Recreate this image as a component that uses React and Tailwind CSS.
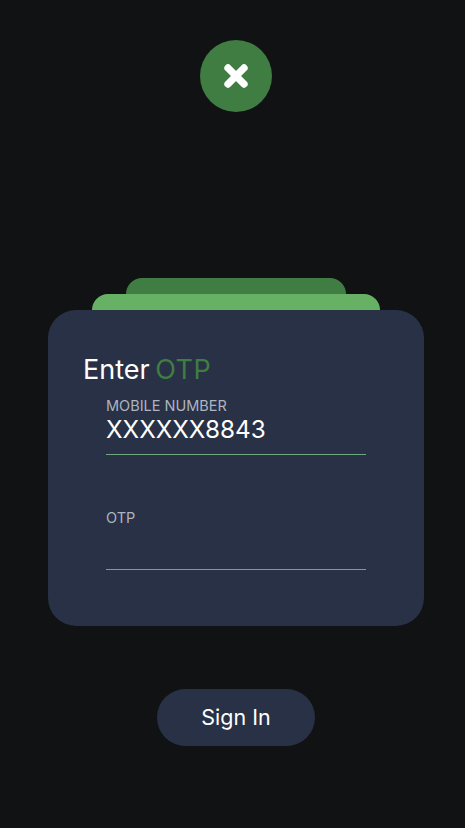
import { X } from 'lucide-react';

export default function App() {
  return (
    <div className="flex flex-col items-center h-[828px] pl-[7px] bg-[#111214] font-['Inter',sans-serif] overflow-hidden">
      <div className="w-[72px] h-[72px] mt-10 rounded-full bg-[#3f7d42] flex items-center justify-center">
        <X className="w-8 h-8 text-white" strokeWidth={5.5} />
      </div>

      {/* stacked cards */}
      <div className="w-[220px] h-4 mt-[166px] rounded-t-[24px] bg-[#3f7d42]"></div>
      <div className="w-[288px] h-4 rounded-t-[24px] bg-[#66b163]"></div>
      <div className="w-[376px] h-[316px] rounded-[28px] bg-[#283145] pt-[43px]">
        <h2 className="pl-[35px] text-[27px] leading-[33px] text-white [word-spacing:-2px]">
          Enter <span className="text-[#3f7d42] tracking-[0.5px]">OTP</span>
        </h2>
        <div className="mx-[58px] mt-[10px] h-[59px] border-b border-[#6fa880]">
          <div className="text-[14.5px] leading-[19px] text-[#aeb4c0]">MOBILE NUMBER</div>
          <div className="text-[24.3px] leading-[29px] text-white">XXXXXX8843</div>
        </div>
        <div className="mx-[58px] mt-[53px] h-[62px] border-b border-[#6fa880]">
          <div className="text-[14.5px] leading-[19px] text-[#aeb4c0]">OTP</div>
        </div>
      </div>

      <button className="w-[158px] h-[57px] mt-[63px] rounded-full bg-[#283145] text-[21.5px] text-white">
        Sign In
      </button>
    </div>
  );
}
